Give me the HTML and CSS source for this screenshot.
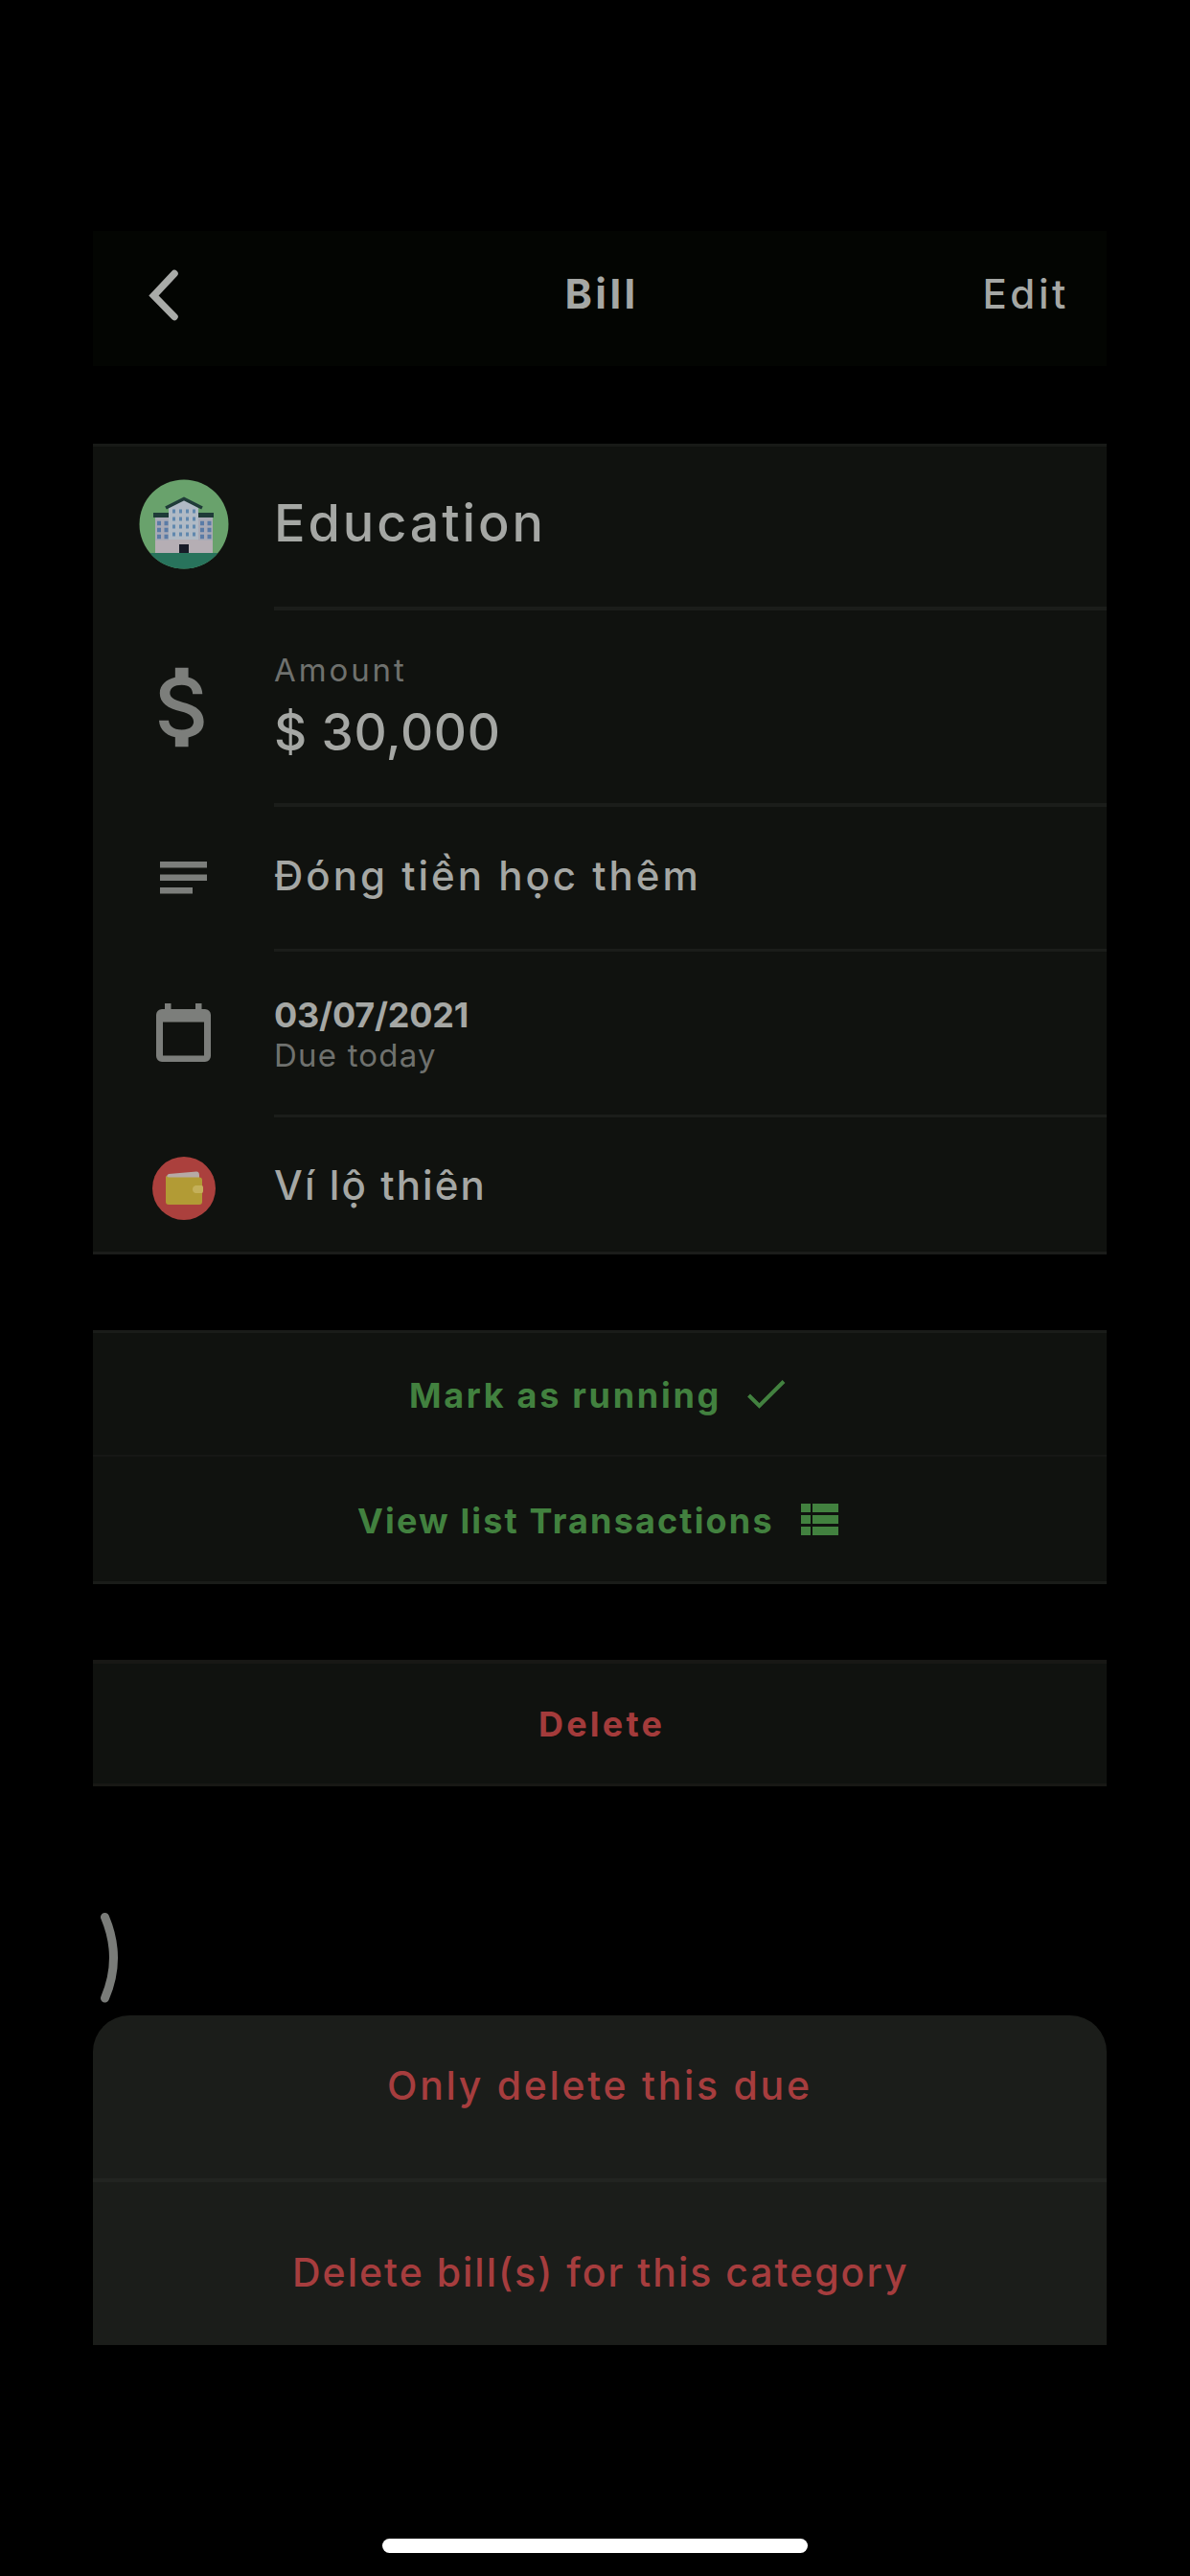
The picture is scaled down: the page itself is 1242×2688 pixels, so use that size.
FILE: index.html
```
<!DOCTYPE html>
<html lang="en">
<head>
<meta charset="utf-8">
<title>Bill</title>
<link rel="stylesheet" href="styles.css">
</head>
<body>
<div class="screen">
  <header class="navbar">
    <svg class="back" viewBox="0 0 32 54"><path d="M27 4.500L5.500 27.500L27 49.500"/></svg>
    <h1 class="title">Bill</h1>
    <span class="edit">Edit</span>
  </header>

  <section class="card details">
    <div class="row row-category">
      <div class="icon">
        <svg width="94" height="94" viewBox="0 0 94 94">
          <defs><clipPath id="disc"><circle cx="47" cy="47" r="46.500"/></clipPath></defs>
          <g clip-path="url(#disc)">
            <path fill="#69a26c" d="M0 0h94v94H0z"/>
            <path fill="#28735c" d="M0 77h94v17H0z"/>
            <path fill="#a9aab6" d="M17 39h60v38H17z"/>
            <path fill="#b0bac5" d="M31 30L47 21L62 30V77H31z"/>
            <path fill="#b5aeb4" d="M31 63h31v14H31zM17 64h14v13H17zM62 64h15v13H62z"/>
            <path fill="#1f3b38" d="M15 35h16v5H15zM62 35h16v5H62z"/>
            <path fill="none" stroke="#1f3b38" stroke-width="3.500" d="M28 30L47 20.500L66 30"/>
            <path fill="none" stroke="#6088ae" stroke-width="4" stroke-dasharray="3 4" d="M35 33.500h24M35 41.500h24M35 49.500h24M35 57.500h24"/>
            <path fill="none" stroke="#5a7ba6" stroke-width="4.500" stroke-dasharray="4 3.500" d="M19 46h12M19 53h12M19 60h12M64 46h12M64 53h12M64 60h12"/>
            <path fill="#171b28" d="M42 68h10v9H42z"/>
          </g>
        </svg>
      </div>
      <div class="body"><span class="name">Education</span></div>
    </div>
    <div class="row row-amount">
      <div class="icon">
        <svg width="110" height="110" viewBox="0 0 24 24"><path fill="#7c7e7b" d="M11.800 10.900c-2.270-.590-3-1.200-3-2.150 0-1.090 1.010-1.850 2.700-1.850 1.780 0 2.440.850 2.500 2.100h2.210c-.070-1.720-1.120-3.300-3.210-3.810V3h-3v2.160c-1.940.420-3.500 1.680-3.500 3.610 0 2.310 1.910 3.460 4.700 4.130 2.500.600 3 1.480 3 2.410 0 .690-.490 1.790-2.700 1.790-2.060 0-2.870-.920-2.980-2.100h-2.200c.120 2.190 1.760 3.420 3.680 3.830V21h3v-2.150c1.950-.370 3.500-1.500 3.500-3.550 0-2.840-2.430-3.810-4.700-4.400z"/></svg>
      </div>
      <div class="body"><span class="caption">Amount</span><span class="amount">$ 30,000</span></div>
    </div>
    <div class="row row-note">
      <div class="icon">
        <svg width="49" height="34" viewBox="0 0 49 34"><path fill="#7c7e7b" d="M0 0h49v6.500H0zM0 13.500h49V20H0zM0 27h34v6.500H0z"/></svg>
      </div>
      <div class="body"><span class="note">Đóng tiền học thêm</span></div>
    </div>
    <div class="row row-date">
      <div class="icon">
        <svg width="57" height="61" viewBox="0 0 57 61"><path fill="#7c7e7b" fill-rule="evenodd" d="M9 0h6.500v6H41V0h6.500v6H51a6 6 0 0 1 6 6v43a6 6 0 0 1-6 6H6a6 6 0 0 1-6-6V12a6 6 0 0 1 6-6h3zM7 19.500V54.500h43V19.500z"/></svg>
      </div>
      <div class="body"><span class="date">03/07/2021</span><span class="due">Due today</span></div>
    </div>
    <div class="row row-wallet">
      <div class="icon">
        <svg width="66" height="66" viewBox="0 0 66 66">
          <circle cx="33" cy="33" r="33" fill="#ab403d"/>
          <path fill="#b6aaa5" d="M17 18l29-2.500q3 0 3 4v5H15v-3q0-3 2-3.500z"/>
          <path fill="#b29b35" d="M14 20q2 1.500 4 1.500h31q3 0 3 3V47q0 3-3 3H17q-3 0-3-3z"/>
          <path fill="#c4b05a" d="M45 30h6.500q1.500 0 1.500 2v4q0 2-1.500 2H45q-3-1-3-4t3-4z"/>
        </svg>
      </div>
      <div class="body"><span class="wallet">Ví lộ thiên</span></div>
    </div>
  </section>

  <section class="card actions">
    <div class="action first"><span class="mark">Mark as running</span>
      <svg class="check" width="40" height="30" viewBox="0 0 40 30"><path d="M1.500 16L12.500 27L38 1.500"/></svg>
    </div>
    <div class="action second"><span class="view">View list Transactions</span>
      <svg class="list" width="39" height="33" viewBox="0 0 39 33"><path fill="#42813f" d="M0 0h10v9H0zM12 0h27v9H12zM0 12h10v9H0zM12 12h27v9H12zM0 24h10v9H0zM12 24h27v9H12z"/></svg>
    </div>
  </section>

  <section class="card remove">Delete</section>

  <svg class="arc" viewBox="0 0 20 96"><path d="M5.500 5.500Q23.500 48 5.500 90"/></svg>

  <section class="sheet">
    <div class="option only">Only delete this due</div>
    <div class="option all">Delete bill(s) for this category</div>
  </section>

  <div class="home"></div>
</div>
</body>
</html>
```
FILE: styles.css
```
* { box-sizing: border-box; }

body {
  margin: 0;
  background: #000;
  color: #a5a7a4;
  font-family: Inter, "Noto Sans", sans-serif;
  font-weight: 500;
  white-space: nowrap;
}

.screen {
  display: flex;
  flex-direction: column;
  width: 1242px;
  height: 2688px;
  padding: 241px 87px 24px 97px;
  overflow: hidden;
}

.screen > * { flex: none; }

svg { display: block; }

.navbar {
  display: grid;
  grid-template-columns: 1fr auto 1fr;
  align-items: start;
  height: 141px;
  margin-bottom: 81px;
  padding: 0 39px;
  background: #030502;
}

.back {
  width: 32px;
  height: 54px;
  margin: 40px 0 0 19px;
  fill: none;
  stroke: #a9aba8;
  stroke-width: 7.500;
  stroke-linecap: round;
}

.title {
  margin: 35px 0 0 4px;
  font-size: 43px;
  font-weight: 700;
  line-height: 60px;
  letter-spacing: 3.400px;
}

.edit {
  justify-self: end;
  margin-top: 36px;
  font-size: 42px;
  line-height: 60px;
  letter-spacing: 3.600px;
}

.card { background: #10120f; }

.details {
  height: 846px;
  margin-bottom: 79px;
  border-bottom: 3px solid #1b1c1a;
  box-shadow: inset 0 3px #181a17;
}

.row {
  display: grid;
  grid-template-columns: 189px 1fr;
}

.row-category { height: 174px; }
.row-amount { height: 205px; }
.row-note { height: 151px; }
.row-date { height: 173px; }
.row-wallet { height: 140px; }

.icon {
  display: flex;
  justify-content: center;
  align-items: flex-start;
}

.row-category .icon { padding-top: 37px; }
.row-amount .icon { padding-top: 46px; }
.row-note .icon { padding-top: 57px; }
.row-date .icon { padding-top: 54px; }
.row-wallet .icon { padding-top: 41px; }

.body {
  display: flex;
  flex-direction: column;
  align-items: flex-start;
  border-bottom: 4px solid #1b1d1a;
}

.row-note .body, .row-date .body { border-bottom-width: 3px; }
.row-wallet .body { border-bottom: 0; }

.name { margin-top: 48px; font-size: 54px; line-height: 70px; letter-spacing: 2.900px; }
.caption { margin-top: 42px; font-size: 33px; font-weight: 400; line-height: 40px; letter-spacing: 2.900px; color: #6f716e; }
.amount { margin-top: 15px; font-size: 53px; line-height: 60px; letter-spacing: 0.600px; }
.note { margin-top: 42px; font-size: 42px; line-height: 60px; letter-spacing: 3px; }
.date { margin-top: 46px; font-size: 36px; line-height: 40px; font-weight: 700; letter-spacing: -0.200px; }
.due { margin-top: 2px; font-size: 33px; font-weight: 400; line-height: 40px; letter-spacing: 1.200px; color: #6f716e; }
.wallet { margin-top: 41px; font-size: 42px; line-height: 60px; letter-spacing: 2.100px; }

.actions {
  height: 265px;
  margin-bottom: 79px;
  border: solid #1a1c19;
  border-width: 3px 0;
}

.action {
  display: flex;
  align-items: flex-start;
  font-size: 36px;
  font-weight: 700;
  line-height: 50px;
  color: #42813f;
}

.first { height: 129px; padding: 40px 0 0 330px; border-bottom: 2px solid #161715; }
.second { height: 130px; padding: 42px 0 0 276px; }

.mark { letter-spacing: 2.700px; }
.view { letter-spacing: 2.150px; }

.check {
  margin: 9px 0 0 27px;
  fill: none;
  stroke: #42813f;
  stroke-width: 4;
}

.list { margin: 7px 0 0 28px; }

.remove {
  height: 132px;
  margin-bottom: 131px;
  padding: 38px 0 0 465px;
  border: solid #181815;
  border-width: 4px 0 3px;
  font-size: 36px;
  font-weight: 700;
  line-height: 50px;
  letter-spacing: 3.200px;
  color: #a33b3b;
}

.arc {
  width: 20px;
  height: 96px;
  margin: 0 0 12px 7px;
  fill: none;
  stroke: #7a7c79;
  stroke-width: 9;
  stroke-linecap: round;
}

.sheet {
  height: 344px;
  margin-bottom: 202px;
  border-radius: 38px 38px 0 0;
  background: #1b1d1a;
  font-size: 41px;
  line-height: 60px;
  color: #a63d3e;
}

.only { height: 174px; padding: 43px 0 0 307px; border-bottom: 4px solid #222421; letter-spacing: 2.700px; }
.all { padding: 64px 0 0 208px; letter-spacing: 2px; }

.home {
  width: 444px;
  height: 15px;
  margin-left: 302px;
  border-radius: 7.500px;
  background: #fff;
}
```
